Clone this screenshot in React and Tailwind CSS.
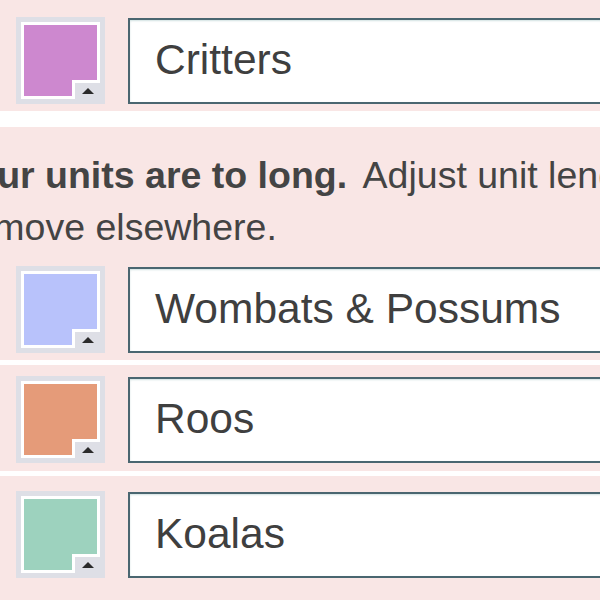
import React from "react";

const font = { fontFamily: '"Liberation Sans", Arial, sans-serif' };

// colour box with the little drop-down notch in its corner
const Swatch = ({ color }) => (
  <div className="w-[89px] h-[87px] shrink-0 bg-[#dedfe6] p-[5px]">
    <div className="relative w-full h-full bg-white p-[3px]">
      <div className={`w-full h-full ${color}`} />
      <div className="absolute right-0 bottom-0 w-[28px] h-[19px] bg-[#dedfe6] border-l-[3px] border-t-[3px] border-white flex items-center justify-center">
        <div className="w-0 h-0 border-l-[6px] border-r-[6px] border-b-[6px] border-l-transparent border-r-transparent border-b-[#2b2b2b]" />
      </div>
    </div>
  </div>
);

const UnitRow = ({ color, name }) => (
  <div className="flex items-center gap-[23px] pl-[16px]">
    <Swatch color={color} />
    <div className="flex-1 h-[86px] flex items-center bg-white border-2 border-[#4a6670] shadow-[inset_0_1px_2px_rgba(120,170,170,0.35)] pl-[25px] -mr-[40px]">
      <span className="text-[42.5px] text-[#3f3f3f] leading-none">{name}</span>
    </div>
  </div>
);

export default function App() {
  return (
    <div className="w-[600px] h-[600px] overflow-hidden bg-white" style={font}>
      {/* 1. first unit */}
      <section className="bg-[#f9e6e5] pt-[17px] pb-[7px]">
        <UnitRow color="bg-[#cd88cf]" name="Critters" />
      </section>

      <div className="h-[16px] bg-white" />

      {/* 2. warning + the rest */}
      <section className="bg-[#f9e6e5] pt-[22px] h-[473px]">
        <div className="text-[37.5px] leading-[52px] text-[#444] whitespace-nowrap">
          <div className="-ml-[48px]">
            <b>Your units are to long.</b>{" "}
            <span className="ml-[5px]">Adjust unit length</span>
          </div>
          <div className="-ml-[40px]">remove elsewhere.</div>
        </div>

        <div className="mt-[13px] pb-[7px] border-b-[5px] border-white">
          <UnitRow color="bg-[#b8c2fb]" name="Wombats & Possums" />
        </div>
        <div className="pt-[11px] pb-[8px] border-b-[5px] border-white">
          <UnitRow color="bg-[#e59b79]" name="Roos" />
        </div>
        <div className="pt-[15px]">
          <UnitRow color="bg-[#9dd2be]" name="Koalas" />
        </div>
      </section>
    </div>
  );
}
